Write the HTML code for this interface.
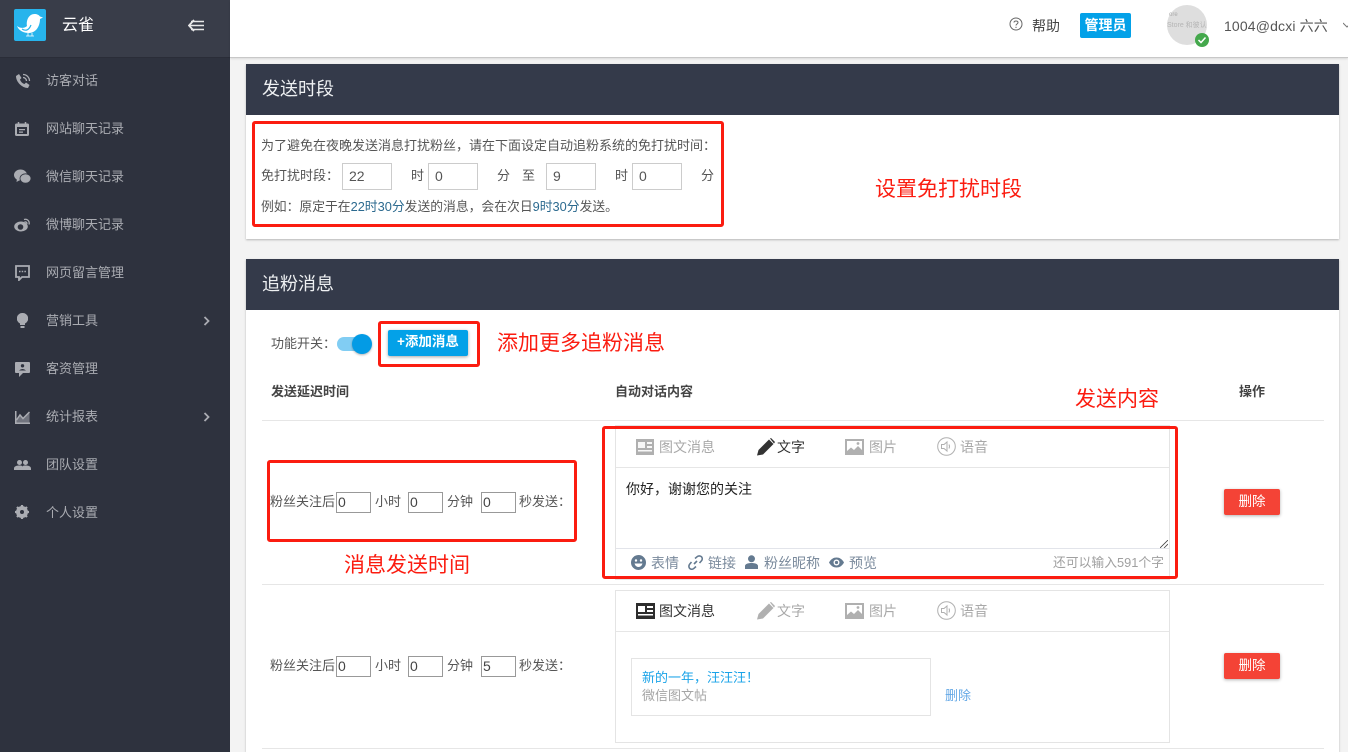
<!DOCTYPE html>
<html><head><meta charset="utf-8"><style>
*{box-sizing:border-box}
html,body{margin:0;padding:0;width:1348px;height:752px;overflow:hidden;background:#f3f3f3;font-family:"Liberation Sans","Noto Sans CJK SC",sans-serif;color:#555}
.a,.t,.r,.i,svg{position:absolute}
.t{white-space:nowrap;font-size:14px;line-height:18px;margin-top:1px}
.m{left:46px;color:#aaacb2;font-size:13px;line-height:18px;white-space:nowrap;position:absolute;margin-top:1px}
.r{border:3px solid #fb1c10;border-radius:3px}
.n{color:#fb1c10;font-size:21px;line-height:28px;white-space:nowrap;position:absolute;margin-top:2px}
.i{border:1px solid #ccc;font-size:14px;line-height:25px;padding-left:6px;color:#555;background:#fff}
.j{border:1px solid #999;height:21px;width:35px;font-size:14px;line-height:19px;padding-left:1px;color:#444;background:#fff;position:absolute}
.g{color:#a9a9a9}.d{color:#333}
.s{font-size:13px}
.ln{position:absolute;height:1px;background:#e6e6e6}
.b{color:#2c6a8f}
</style></head><body>
<!-- sidebar -->
<div class="a" style="left:0;top:0;width:230px;height:752px;background:#2e323e"></div>
<div class="a" style="left:0;top:0;width:230px;height:58px;background:#393d49;border-bottom:1px solid #2a2d38"></div>
<div class="a" style="left:14px;top:9px;width:32px;height:32px;background:#27b4ec;border-radius:2px"></div>
<svg style="left:14px;top:9px" width="32" height="32" viewBox="0 0 32 32"><path d="M3 17C7 20 11 19 13 17C12 11 15 5 20.500 5C23 5 25 6 26 7.500L29 8.500L26 10C26 17 22 24 15 24C10 24 5 22 3 17Z" fill="#fff"/><path d="M8 20C12 22.500 15 21 17 16" stroke="#27b4ec" stroke-width="1.200" fill="none"/><path d="M12 27H20M14 24V27M18 24V27" stroke="#fff" stroke-width=".8"/></svg>
<div class="t" style="left:62px;top:15px;font-size:16px;line-height:20px;color:#fff">云雀</div>
<svg style="left:188px;top:19px" width="17" height="13" viewBox="0 0 17 13"><path d="M6 1L1 6.500L6 12" stroke="#e8e8e8" stroke-width="1.800" fill="none"/><path d="M3 2.500H16M2 6.500H16M3 10.500H16" stroke="#e8e8e8" stroke-width="1.600" fill="none"/></svg>

<svg style="left:15px;top:73px" width="16" height="16" viewBox="0 0 16 16" fill="#aaacb2"><path d="M1 3L4 1L6.500 5L5 6.500C5.500 8.500 7.500 10.500 9.500 11L11 9.500L14.500 12L13 15C7 15 1 9 1 3Z"/><path d="M8 1.500A6.500 6.500 0 0 1 14.500 8M8 4.500A3.500 3.500 0 0 1 11.500 8" stroke="#aaacb2" stroke-width="1.300" fill="none"/></svg>
<div class="m" style="top:71px">访客对话</div>
<svg style="left:15px;top:122px" width="14" height="14" viewBox="0 0 14 14"><rect x="0" y="1.500" width="14" height="12.500" rx="1.500" fill="#aaacb2"/><path d="M2 5H12V12H2Z" fill="#2e323e"/><path d="M4 7H10V8.300H4ZM4 9.500H8V10.700H4Z" fill="#aaacb2"/><path d="M3.500 0V2M10.500 0V2" stroke="#aaacb2" stroke-width="1.500"/></svg>
<div class="m" style="top:119px">网站聊天记录</div>
<svg style="left:14px;top:169px" width="17" height="15" viewBox="0 0 17 15" fill="#aaacb2"><ellipse cx="6.500" cy="6" rx="6.500" ry="5.500"/><path d="M3 9.500L2.500 13L6 11Z"/><ellipse cx="11.500" cy="9.500" rx="5.500" ry="4.700" stroke="#2e323e" stroke-width=".8"/></svg>
<div class="m" style="top:167px">微信聊天记录</div>
<svg style="left:14px;top:217px" width="17" height="15" viewBox="0 0 17 15"><ellipse cx="7" cy="9.500" rx="6.800" ry="5" fill="#aaacb2"/><circle cx="6.500" cy="10" r="2.800" fill="#2e323e"/><path d="M10 2.500C13 1.500 16 4 15 7.500M10.500 5C12 4.500 13.300 5.500 12.800 7" stroke="#aaacb2" stroke-width="1.300" fill="none"/></svg>
<div class="m" style="top:215px">微博聊天记录</div>
<svg style="left:15px;top:265px" width="15" height="16" viewBox="0 0 15 16"><path d="M1 1H14V12H7L4 15V12H1Z" stroke="#aaacb2" stroke-width="1.800" fill="none"/><path d="M4 6.500H11" stroke="#aaacb2" stroke-width="1.500" stroke-dasharray="1.500 1.200"/></svg>
<div class="m" style="top:263px">网页留言管理</div>
<svg style="left:17px;top:313px" width="11" height="15" viewBox="0 0 11 15" fill="#aaacb2"><path d="M5.500 0A5.500 5.500 0 0 1 8 10.500V12H3V10.500A5.500 5.500 0 0 1 5.500 0Z"/><path d="M3.500 13H7.500V15H3.500Z"/></svg>
<div class="m" style="top:311px">营销工具</div>
<svg style="left:203px;top:316px" width="7" height="10" viewBox="0 0 7 10"><path d="M1.500 1L5.500 5L1.500 9" stroke="#aaacb2" stroke-width="1.800" fill="none"/></svg>
<svg style="left:15px;top:361px" width="15" height="16" viewBox="0 0 15 16"><path d="M1 1Q0 1 0 2V11Q0 12 1 12H4V16L8 12H14Q15 12 15 11V2Q15 1 14 1Z" fill="#aaacb2"/><circle cx="7.500" cy="4.800" r="1.700" fill="#2e323e"/><path d="M4 9.500Q7.500 6.500 11 9.500Z" fill="#2e323e"/></svg>
<div class="m" style="top:359px">客资管理</div>
<svg style="left:15px;top:411px" width="15" height="13" viewBox="0 0 15 13"><path d="M0 0H1.500V11.500H15V13H0Z" fill="#aaacb2"/><path d="M1.500 9L5 4L8 7.500L14.500 1V11.500H1.500Z" fill="#aaacb2" opacity=".55"/><path d="M1.500 9L5 4L8 7.500L14.500 1" stroke="#aaacb2" stroke-width="1.500" fill="none"/></svg>
<div class="m" style="top:407px">统计报表</div>
<svg style="left:203px;top:412px" width="7" height="10" viewBox="0 0 7 10"><path d="M1.500 1L5.500 5L1.500 9" stroke="#aaacb2" stroke-width="1.800" fill="none"/></svg>
<svg style="left:14px;top:460px" width="17" height="10" viewBox="0 0 17 10" fill="#aaacb2"><circle cx="5.500" cy="2.500" r="2.500"/><circle cx="11.500" cy="2.500" r="2.500"/><path d="M0 10V8.500C0 6 3 5.500 5.500 5.500C8 5.500 8.500 6 8.500 7C8.500 6 9 5.500 11.500 5.500C14 5.500 17 6 17 8.500V10Z"/></svg>
<div class="m" style="top:455px">团队设置</div>
<svg style="left:15px;top:505px" width="14" height="14" viewBox="0 0 14 14"><circle cx="7" cy="7" r="4.500" stroke="#aaacb2" stroke-width="3" fill="none"/><path d="M7 0V14M0 7H14M2 2L12 12M12 2L2 12" stroke="#aaacb2" stroke-width="2.200"/><circle cx="7" cy="7" r="3.800" fill="#aaacb2"/><circle cx="7" cy="7" r="2" fill="#2e323e"/></svg>
<div class="m" style="top:503px">个人设置</div>

<!-- topbar -->
<div class="a" style="left:230px;top:0;width:1118px;height:58px;background:#fff;border-bottom:1px solid #c8c8c8;box-shadow:0 1px 2px rgba(0,0,0,.1)"></div>
<svg style="left:1009px;top:17px" width="14" height="14" viewBox="0 0 14 14"><circle cx="7" cy="7" r="6" stroke="#666" fill="none"/><path d="M5 5.500C5 3.500 9 3.500 9 5.500C9 7 7 7 7 8.500" stroke="#666" fill="none"/><path d="M7 9.800V11" stroke="#666"/></svg>
<div class="t" style="left:1032px;top:16px;color:#444">帮助</div>
<div class="a" style="left:1080px;top:13px;width:51px;height:25px;background:#03a1e8;border-radius:2px;color:#fff;font-size:14px;line-height:25px;text-align:center;font-weight:bold">管理员</div>
<div class="a" style="left:1167px;top:5px;width:40px;height:40px;border-radius:50%;background:#dedede;overflow:hidden"></div>
<div class="t" style="left:1169px;top:10px;font-size:6px;line-height:8px;color:#aaa">ore</div>
<div class="t" style="left:1167px;top:20px;width:40px;overflow:hidden;font-size:7px;line-height:9px;color:#b5b5b5">Store 和彼认下</div>
<div class="a" style="left:1195px;top:33px;width:14px;height:14px;border-radius:50%;background:#44a84c"></div>
<svg style="left:1195px;top:33px" width="14" height="14" viewBox="0 0 14 14"><path d="M3.500 7L6 9.500L10.500 4.500" stroke="#fff" stroke-width="1.500" fill="none"/></svg>
<div class="t" style="left:1224px;top:16px;color:#555;letter-spacing:.15px">1004@dcxi 六六</div>
<svg style="left:1343px;top:22px" width="5" height="6" viewBox="0 0 5 6"><path d="M0 1L4 5L8 1" stroke="#777" fill="none"/></svg>

<!-- panel 1 -->
<div class="a" style="left:246px;top:64px;width:1093px;height:175px;background:#fff;box-shadow:0 1px 2px rgba(0,0,0,.25)"></div>
<div class="a" style="left:246px;top:64px;width:1093px;height:51px;background:#343a4a"></div>
<div class="t" style="left:262px;top:76px;font-size:18px;line-height:24px;color:#eef0f2">发送时段</div>
<div class="t s" style="left:261px;top:136px">为了避免在夜晚发送消息打扰粉丝，请在下面设定自动追粉系统的免打扰时间：</div>
<div class="t s" style="left:261px;top:166px">免打扰时段：</div>
<div class="i" style="position:absolute;left:342px;top:163px;width:50px;height:27px">22</div>
<div class="t s" style="left:411px;top:166px">时</div>
<div class="i" style="position:absolute;left:428px;top:163px;width:50px;height:27px">0</div>
<div class="t s" style="left:497px;top:166px">分</div>
<div class="t s" style="left:522px;top:166px">至</div>
<div class="i" style="position:absolute;left:546px;top:163px;width:50px;height:27px">9</div>
<div class="t s" style="left:615px;top:166px">时</div>
<div class="i" style="position:absolute;left:632px;top:163px;width:50px;height:27px">0</div>
<div class="t s" style="left:701px;top:166px">分</div>
<div class="t s" style="left:261px;top:197px;font-size:12.800px">例如：原定于在<span class="b">22时30分</span>发送的消息，会在次日<span class="b">9时30分</span>发送。</div>
<div class="r" style="left:252px;top:121px;width:472px;height:106px"></div>
<div class="n" style="left:875px;top:174px">设置免打扰时段</div>

<!-- panel 2 -->
<div class="a" style="left:246px;top:259px;width:1093px;height:493px;background:#fff;box-shadow:0 1px 2px rgba(0,0,0,.25)"></div>
<div class="a" style="left:246px;top:259px;width:1093px;height:51px;background:#343a4a"></div>
<div class="t" style="left:262px;top:271px;font-size:18px;line-height:24px;color:#eef0f2">追粉消息</div>
<div class="t s" style="left:271px;top:334px">功能开关：</div>
<div class="a" style="left:337px;top:337px;width:30px;height:14px;border-radius:7px;background:#81cdf3"></div>
<div class="a" style="left:352px;top:334px;width:20px;height:20px;border-radius:50%;background:#039be5;box-shadow:0 1px 2px rgba(0,0,0,.3)"></div>
<div class="a" style="left:388px;top:330px;width:80px;height:26px;background:#03a1e8;border-radius:2px;color:#fff;font-size:13.500px;font-weight:bold;line-height:24px;text-align:center;box-shadow:0 1px 3px rgba(0,0,0,.35)">+添加消息</div>
<div class="r" style="left:378px;top:321px;width:102px;height:46px"></div>
<div class="n" style="left:497px;top:328px">添加更多追粉消息</div>
<div class="t s" style="left:271px;top:382px;font-weight:bold;color:#444">发送延迟时间</div>
<div class="t s" style="left:615px;top:382px;font-weight:bold;color:#444">自动对话内容</div>
<div class="t s" style="left:1239px;top:382px;font-weight:bold;color:#444">操作</div>
<div class="n" style="left:1075px;top:384px">发送内容</div>
<div class="ln" style="left:262px;top:420px;width:1062px"></div>

<!-- row 1 -->
<div class="t s" style="left:270px;top:492px">粉丝关注后</div>
<div class="j" style="left:336px;top:492px">0</div>
<div class="t s" style="left:375px;top:492px">小时</div>
<div class="j" style="left:408px;top:492px">0</div>
<div class="t s" style="left:447px;top:492px">分钟</div>
<div class="j" style="left:481px;top:492px">0</div>
<div class="t s" style="left:519px;top:492px">秒发送：</div>
<div class="r" style="left:267px;top:460px;width:310px;height:82px"></div>
<div class="n" style="left:344px;top:550px">消息发送时间</div>

<div class="a" style="left:615px;top:425px;width:555px;height:155px;border:1px solid #e4e4e4;background:#fff"></div>
<div class="ln" style="left:616px;top:467px;width:553px"></div>
<div class="ln" style="left:616px;top:548px;width:553px;background:#e2e4ea"></div>
<svg style="left:636px;top:439px" width="18" height="16" viewBox="0 0 18 16"><path d="M0 0H18V16H0Z" fill="#b0b0b0"/><path d="M2 3H9V9H2ZM11 3H16V5H11ZM11 7H16V9H11ZM2 11H16V12.500H2Z" fill="#fff" opacity=".9"/></svg>
<div class="t g" style="left:659px;top:437px">图文消息</div>
<svg style="left:757px;top:438px" width="18" height="18" viewBox="0 0 18 18"><path d="M0 17.500L1.500 12L12 1.500L16.500 6L6 16.500Z" fill="#333"/><path d="M13 .5L14 0L18 4L17 5.500Z" fill="#333"/></svg>
<div class="t d" style="left:777px;top:437px">文字</div>
<svg style="left:845px;top:439px" width="19" height="16" viewBox="0 0 19 16"><path d="M0 0H19V16H0Z" fill="#b0b0b0"/><path d="M2 2H17V11L13 7L9 11L6 8.500L2 12Z" fill="#fff"/><circle cx="13" cy="4.500" r="1.400" fill="#b0b0b0"/></svg>
<div class="t g" style="left:869px;top:437px">图片</div>
<svg style="left:937px;top:437px" width="19" height="19" viewBox="0 0 19 19"><circle cx="9.500" cy="9.500" r="8.800" stroke="#b0b0b0" fill="none"/><path d="M4.500 7.500H7L10 5V14L7 11.500H4.500Z" stroke="#b0b0b0" fill="none"/><path d="M12 7.500Q13 9.500 12 11.500" stroke="#b0b0b0" fill="none"/></svg>
<div class="t g" style="left:960px;top:437px">语音</div>
<div class="t" style="left:626px;top:479px;color:#222">你好，谢谢您的关注</div>
<svg style="left:1160px;top:540px" width="8" height="8" viewBox="0 0 8 8"><path d="M0 8L8 0M4 8L8 4" stroke="#444" stroke-width=".8"/></svg>
<svg style="left:631px;top:555px" width="15" height="15" viewBox="0 0 15 15"><circle cx="7.500" cy="7.500" r="7.500" fill="#647a90"/><circle cx="5" cy="5.500" r="1.200" fill="#fff"/><circle cx="10" cy="5.500" r="1.200" fill="#fff"/><path d="M3.500 8.500H11.500Q10.500 12 7.500 12Q4.500 12 3.500 8.500Z" fill="#fff"/></svg>
<div class="t" style="left:651px;top:553px;color:#7a8a9c">表情</div>
<svg style="left:688px;top:555px" width="15" height="15" viewBox="0 0 15 15"><path d="M6 9L9 6M7 3.500L9 1.800C10.500.5 12.500.7 13.500 1.800C14.500 3 14.500 4.700 13.300 6L11.500 8M8 11.500L6 13.300C4.700 14.500 3 14.500 1.800 13.500C.7 12.500.5 10.500 1.800 9L3.500 7" stroke="#647a90" stroke-width="1.600" fill="none"/></svg>
<div class="t" style="left:708px;top:553px;color:#7a8a9c">链接</div>
<svg style="left:745px;top:555px" width="13" height="14" viewBox="0 0 13 14" fill="#647a90"><circle cx="6.500" cy="3.800" r="3.500"/><path d="M0 14V11C0 9 3 8 6.500 8C10 8 13 9 13 11V14Z"/></svg>
<div class="t" style="left:764px;top:553px;color:#7a8a9c">粉丝昵称</div>
<svg style="left:829px;top:557px" width="15" height="11" viewBox="0 0 15 11"><path d="M0 5.500C2 2 4.500 .5 7.500 .5C10.500 .5 13 2 15 5.500C13 9 10.500 10.500 7.500 10.500C4.500 10.500 2 9 0 5.500Z" fill="#647a90"/><circle cx="7.500" cy="5.500" r="3" fill="#fff"/><circle cx="7.500" cy="5.500" r="1.600" fill="#647a90"/></svg>
<div class="t" style="left:849px;top:553px;color:#7a8a9c">预览</div>
<div class="t" style="left:1053px;top:553px;color:#a0a0a0;font-size:12.800px">还可以输入591个字</div>
<div class="r" style="left:602px;top:426px;width:576px;height:153px"></div>
<div class="a" style="left:1224px;top:489px;width:56px;height:26px;background:#f44336;border-radius:2px;color:#fff;font-size:13.500px;line-height:25px;text-align:center;box-shadow:0 1px 3px rgba(0,0,0,.3)">删除</div>
<div class="ln" style="left:262px;top:584px;width:1062px"></div>

<!-- row 2 -->
<div class="t s" style="left:270px;top:656px">粉丝关注后</div>
<div class="j" style="left:336px;top:656px">0</div>
<div class="t s" style="left:375px;top:656px">小时</div>
<div class="j" style="left:408px;top:656px">0</div>
<div class="t s" style="left:447px;top:656px">分钟</div>
<div class="j" style="left:481px;top:656px">5</div>
<div class="t s" style="left:519px;top:656px">秒发送：</div>
<div class="a" style="left:615px;top:590px;width:555px;height:153px;border:1px solid #e4e4e4;background:#fff"></div>
<div class="ln" style="left:616px;top:631px;width:553px"></div>
<svg style="left:636px;top:603px" width="19" height="16" viewBox="0 0 19 16"><path d="M0 0H19V16H0Z" fill="#2d2d2d"/><path d="M2 3H9V9H2ZM11 3H17V5H11ZM11 7H17V9H11ZM2 11H17V12.500H2Z" fill="#fff"/></svg>
<div class="t d" style="left:659px;top:601px">图文消息</div>
<svg style="left:757px;top:602px" width="18" height="18" viewBox="0 0 18 18" fill="#b0b0b0"><path d="M0 17.500L1.500 12L12 1.500L16.500 6L6 16.500Z"/><path d="M13 .5L14 0L18 4L17 5.500Z"/></svg>
<div class="t g" style="left:777px;top:601px">文字</div>
<svg style="left:845px;top:603px" width="19" height="16" viewBox="0 0 19 16"><path d="M0 0H19V16H0Z" fill="#b0b0b0"/><path d="M2 2H17V11L13 7L9 11L6 8.500L2 12Z" fill="#fff"/><circle cx="13" cy="4.500" r="1.400" fill="#b0b0b0"/></svg>
<div class="t g" style="left:869px;top:601px">图片</div>
<svg style="left:937px;top:601px" width="19" height="19" viewBox="0 0 19 19"><circle cx="9.500" cy="9.500" r="8.800" stroke="#b0b0b0" fill="none"/><path d="M4.500 7.500H7L10 5V14L7 11.500H4.500Z" stroke="#b0b0b0" fill="none"/><path d="M12 7.500Q13 9.500 12 11.500" stroke="#b0b0b0" fill="none"/></svg>
<div class="t g" style="left:960px;top:601px">语音</div>
<div class="a" style="left:631px;top:658px;width:300px;height:58px;border:1px solid #e4e4e4"></div>
<div class="t s" style="left:642px;top:668px;color:#1aa3e8">新的一年，汪汪汪！</div>
<div class="t s" style="left:642px;top:686px;color:#a5a5a5">微信图文帖</div>
<div class="t s" style="left:945px;top:686px;color:#64a8e6">删除</div>
<div class="a" style="left:1224px;top:653px;width:56px;height:26px;background:#f44336;border-radius:2px;color:#fff;font-size:13.500px;line-height:25px;text-align:center;box-shadow:0 1px 3px rgba(0,0,0,.3)">删除</div>
<div class="ln" style="left:262px;top:748px;width:1062px"></div>
</body></html>
